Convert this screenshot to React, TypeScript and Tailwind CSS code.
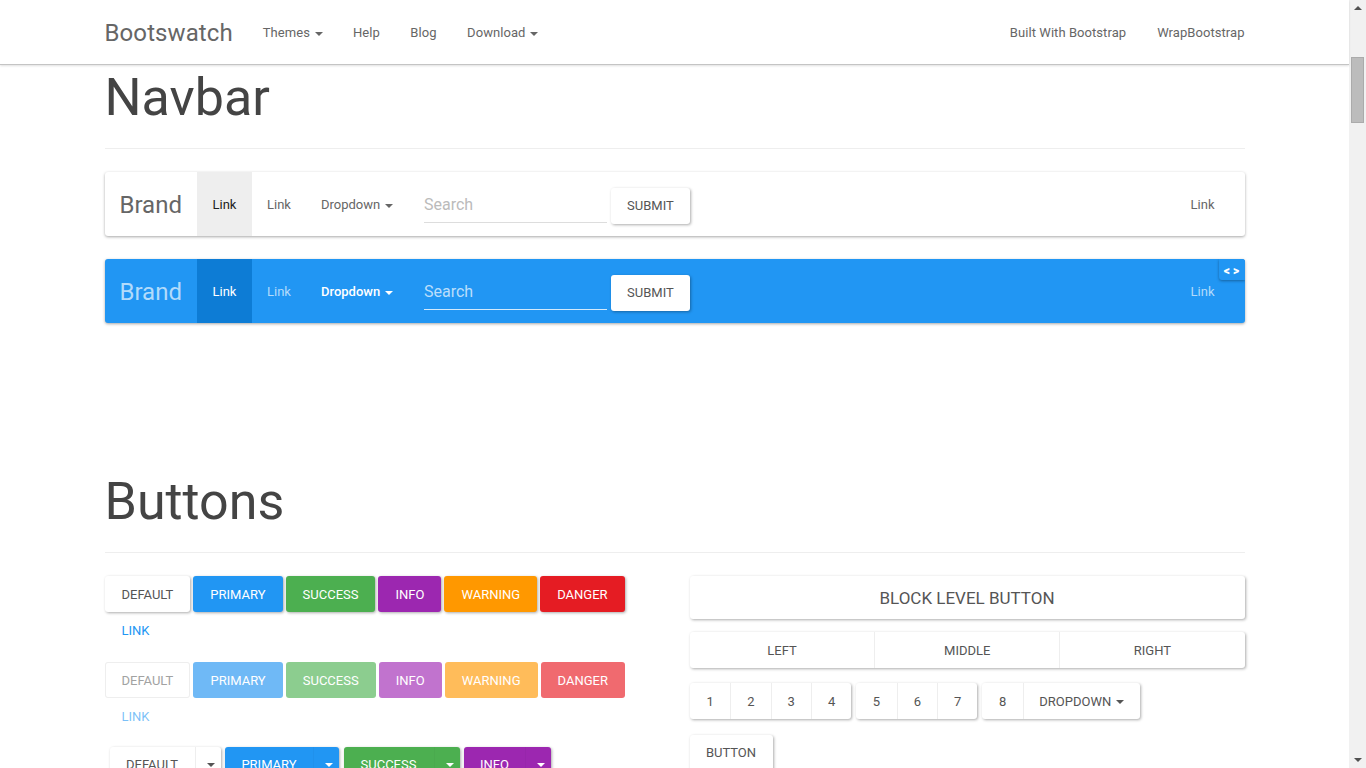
import React from 'react';

const font = "font-['Roboto',sans-serif]";

function Caret({ className = '' }: { className?: string }) {
  return <span className={`inline-block w-0 h-0 ml-[5px] border-x-[4px] border-t-[4px] border-x-transparent border-t-current align-middle ${className}`} />;
}

const raised = 'shadow-[1px_1px_3px_rgba(0,0,0,0.33)]';

function Btn({ label, className }: { label: string; className: string }) {
  return (
    <button className={`h-[36px] px-[17px] pt-[1px] rounded-[3px] text-[13px] uppercase font-normal ${className}`}>{label}</button>
  );
}

const row1 = [
  { label: 'Default', className: `bg-white text-[#555] ${raised}` },
  { label: 'Primary', className: `bg-[#2196f3] text-white ${raised}` },
  { label: 'Success', className: `bg-[#4caf50] text-white ${raised}` },
  { label: 'Info', className: `bg-[#9c27b0] text-white ${raised}` },
  { label: 'Warning', className: `bg-[#ff9800] text-white ${raised}` },
  { label: 'Danger', className: `bg-[#e51c23] text-white ${raised}` },
];

const row2 = [
  { label: 'Default', className: 'bg-white text-[#a2a2a2] shadow-[inset_0_0_0_1px_#eee]' },
  { label: 'Primary', className: 'bg-[#6fb9f6] text-white' },
  { label: 'Success', className: 'bg-[#8ccd8f] text-white' },
  { label: 'Info', className: 'bg-[#c173ce] text-white' },
  { label: 'Warning', className: 'bg-[#ffbc5a] text-white' },
  { label: 'Danger', className: 'bg-[#f06a6f] text-white' },
];

const splits = [
  { label: 'Default', cls: 'bg-white text-[#555] w-[111px]', line: 'border-[#eee]' },
  { label: 'Primary', cls: 'bg-[#2196f3] text-white w-[114px]', line: 'border-[#2091ec]' },
  { label: 'Success', cls: 'bg-[#4caf50] text-white w-[116px]', line: 'border-[#4aaa4e]' },
  { label: 'Info', cls: 'bg-[#9c27b0] text-white w-[87px]', line: 'border-[#9726ab]' },
];

function DemoNavbar({ blue }: { blue?: boolean }) {
  const brand = blue ? 'text-[#b2dbfb]' : 'text-[#666]';
  const link = blue ? 'text-[#b2dbfb]' : 'text-[#666]';
  return (
    <div className={`relative flex items-center h-[64px] rounded-[3px] text-[13px] shadow-[0_1px_3px_rgba(0,0,0,0.35)] overflow-hidden ${blue ? 'bg-[#2196f3]' : 'bg-white'}`}>
      <span className={`px-[15px] pt-[2px] text-[24px] ${brand}`}>Brand</span>
      <span className={`h-full w-[55px] flex items-center justify-center pt-[2px] ${blue ? 'bg-[#0d7cd5] text-white' : 'bg-[#eee] text-[#212121]'}`}>Link</span>
      <span className={`w-[54px] text-center pt-[2px] ${link}`}>Link</span>
      <span className={`w-[103px] pl-[15px] pt-[2px] ${blue ? 'text-white font-medium' : 'text-[#666]'}`}>Dropdown<Caret /></span>
      <input
        readOnly
        placeholder="Search"
        className={`ml-[15px] w-[183px] h-[38px] pt-[2px] bg-transparent outline-none text-[16px] border-b ${blue ? 'border-[#d3eafc] placeholder:text-[#bbdefb]' : 'border-[#ddd] placeholder:text-[#bbb]'}`}
      />
      <button className={`ml-[4px] mt-[3px] h-[36px] w-[79px] rounded-[3px] bg-white text-[13px] text-[#555] uppercase ${raised}`}>Submit</button>
      <span className={`ml-auto mr-[15px] px-[15px] pt-[2px] ${link}`}>Link</span>
      {blue && (
        <span className="absolute top-0 right-0 w-[26px] h-[21px] flex items-center justify-center rounded-bl-[3px] bg-[#2196f3] text-white text-[12px] font-black leading-none pt-[2px] shadow-[0_1px_3px_rgba(0,0,0,0.35)]">&lt; &gt;</span>
      )}
    </div>
  );
}

function Group({ items, className }: { items: { label: React.ReactNode; w: string }[]; className?: string }) {
  return (
    <div className={`flex rounded-[3px] bg-white text-[13px] text-[#555] uppercase ${raised} ${className ?? ''}`}>
      {items.map((item, i) => (
        <button key={i} className={`h-[36px] pt-[1px] uppercase ${item.w} ${i > 0 ? 'border-l border-[#eee]' : ''}`}>{item.label}</button>
      ))}
    </div>
  );
}

export default function App() {
  return (
    <div className={`flex w-[1366px] h-[768px] overflow-hidden bg-white text-[#444] ${font}`}>
      <div className="flex-1 min-w-0">
        <header className="relative z-10 h-[65px] bg-white border-b border-[#c4c4c4] shadow-[0_1px_2px_rgba(0,0,0,0.12)]">
          <div className="mx-auto w-[1170px] px-[15px] h-full flex items-center text-[13px] text-[#666] tracking-[0.06px]">
            <span className="text-[24px] mr-[15px] pt-[2px] tracking-[0.1px]">Bootswatch</span>
            <span className="px-[15px] pt-[2px]">Themes<Caret /></span>
            <span className="px-[15px] pt-[2px]">Help</span>
            <span className="ml-[0.5px] px-[15px] pt-[2px]">Blog</span>
            <span className="ml-[0.5px] px-[15px] pt-[2px]">Download<Caret /></span>
            <span className="ml-auto pt-[2px]">Built With Bootstrap</span>
            <span className="ml-[31px] pt-[2px]">WrapBootstrap</span>
          </div>
        </header>

        <main className="mx-auto w-[1170px] px-[15px]">
          <h1 className="mt-[2px] text-[52px] leading-[62px] pb-[19px] border-b border-[#eee]">Navbar</h1>
          <div className="mt-[23px] flex flex-col gap-[23px]">
            <DemoNavbar />
            <DemoNavbar blue />
          </div>

          <h1 className="mt-[148px] text-[52px] leading-[62px] pb-[19px] border-b border-[#eee]">Buttons</h1>

          <div className="mt-[23px] grid grid-cols-2 gap-x-[30px]">
            <div>
              <div className="flex flex-wrap gap-x-[3px] mb-[14px]">
                {row1.map((b) => <Btn key={b.label} {...b} />)}
                <Btn label="Link" className="text-[#2196f3]" />
              </div>
              <div className="flex flex-wrap gap-x-[3.1px] mb-[13px]">
                {row2.map((b) => <Btn key={b.label} {...b} />)}
                <Btn label="Link" className="text-[#2196f3]/60" />
              </div>
              <div className="flex gap-x-[4.5px] ml-[5px]">
                {splits.map((s) => (
                  <div key={s.label} className={`flex h-[36px] rounded-[3px] text-[13px] uppercase ${raised} ${s.cls}`}>
                    <span className="flex-1 flex items-center justify-center">{s.label}</span>
                    <span className={`w-[26px] flex items-center justify-center border-l ${s.line}`}><Caret className="ml-0" /></span>
                  </div>
                ))}
              </div>
            </div>

            <div>
              <button className={`block w-full h-[43px] pt-[3px] rounded-[3px] bg-white text-[17px] text-[#555] uppercase ${raised}`}>Block level button</button>
              <Group
                className="mt-[13px] ml-[0.5px]"
                items={[
                  { label: 'Left', w: 'flex-1' },
                  { label: 'Middle', w: 'flex-1' },
                  { label: 'Right', w: 'flex-1' },
                ]}
              />
              <div className="mt-[15px] ml-[0.5px] flex gap-[5.2px]">
                <Group items={['1', '2', '3', '4'].map((n) => ({ label: n, w: 'w-[40.3px]' }))} />
                <Group items={['5', '6', '7'].map((n) => ({ label: n, w: 'w-[40.3px]' }))} />
                <Group
                  items={[
                    { label: '8', w: 'w-[40.3px]' },
                    { label: <>Dropdown<Caret /></>, w: 'w-[117px]' },
                  ]}
                />
              </div>
              <button className={`mt-[16px] h-[36px] w-[83px] rounded-[3px] bg-white text-[13px] text-[#555] uppercase ${raised}`}>Button</button>
            </div>
          </div>
        </main>
      </div>

      {/* scrollbar */}
      <div className="w-[17px] h-full bg-[#f1f1f1] flex flex-col items-center shrink-0">
        <span className="mt-[6px] w-0 h-0 border-x-[4px] border-b-[4px] border-x-transparent border-b-[#505050]" />
        <div className="mt-[47px] w-[13px] h-[66px] bg-[#bcbcbc] border border-[#ababab]" />
        <span className="mt-auto mb-[6px] w-0 h-0 border-x-[4px] border-t-[4px] border-x-transparent border-t-[#505050]" />
      </div>
    </div>
  );
}
